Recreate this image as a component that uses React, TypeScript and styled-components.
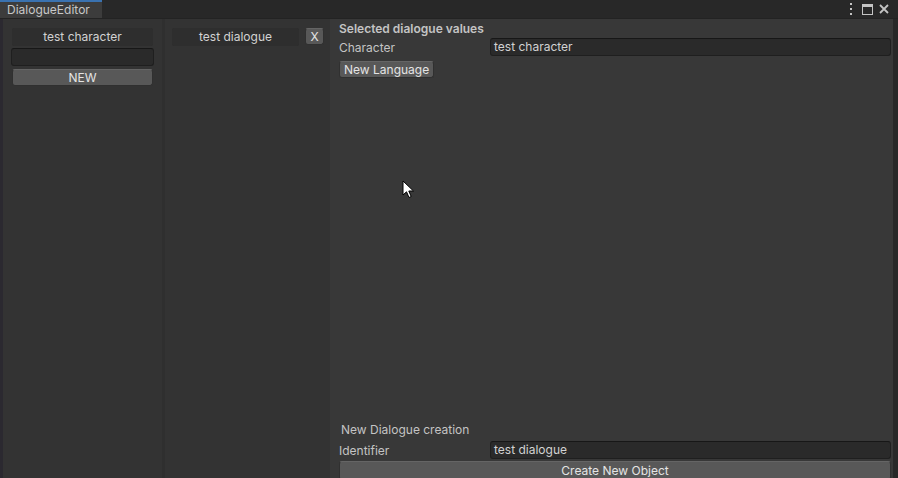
import React from "react";
import styled, { createGlobalStyle } from "styled-components";

const Global = createGlobalStyle`
  html, body { margin: 0; padding: 0; background: #282828; }
  body { font-family: Inter, "Noto Sans", sans-serif; font-size: 12px; }
  * { box-sizing: border-box; }
`;

const Window = styled.div`
  position: relative;
  width: 898px;
  height: 478px;
  display: flex;
  flex-direction: column;
  overflow: hidden;
  background: #282828;
  color: #c4c4c4;
`;

const TabBar = styled.div`
  height: 19px;
  flex: none;
  display: flex;
  align-items: stretch;
  background: #282828;
  border-bottom: 1px solid #232323;
`;

const Tab = styled.div`
  width: 102px;
  background: #3c3c3c;
  border-top: 2px solid #3a72b0;
  padding-left: 7px;
  line-height: 16px;
  font-size: 12px;
  color: #c8c8c8;
`;

const TabSpacer = styled.div`
  flex: 1;
`;

const WindowIcons = styled.div`
  display: flex;
  align-items: center;
  gap: 6px;
  padding-right: 9px;
  color: #c4c4c4;
`;

const Kebab = styled.svg`
  margin-right: 3px;
`;

const Body = styled.div`
  flex: 1;
  display: flex;
  min-height: 0;
  border-left: 3px solid #2b2930;
`;

const ListColumn = styled.div<{ $w: number; $pl: number }>`
  width: ${(p) => p.$w}px;
  flex: none;
  background: #333333;
  padding: 9px 8px 0 ${(p) => p.$pl}px;
  display: flex;
  flex-direction: column;
  align-items: stretch;
  gap: 2px;
`;

const ColumnDivider = styled.div`
  width: 3px;
  flex: none;
  background: #2f2f2f;
`;

const ItemRow = styled.div`
  display: flex;
  gap: 6px;
`;

const ItemBox = styled.div<{ $w?: number }>`
  height: 18px;
  flex: none;
  ${(p) => (p.$w ? `width: ${p.$w}px;` : "margin: 0 1px;")}
  background: #2e2e2e;
  border-radius: 2px;
  text-align: center;
  line-height: 18px;
  color: #d2d2d2;
`;

const TextInput = styled.div`
  height: 18px;
  flex: none;
  background: #2a2a2a;
  border: 1px solid #1f1f1f;
  border-top-color: #171717;
  border-radius: 3px;
  padding-left: 3px;
  line-height: 16px;
  color: #d2d2d2;
`;

const FieldInput = styled(TextInput)`
  flex: 1;
`;

const Button = styled.div<{ $w?: number; $h?: number }>`
  height: ${(p) => p.$h ?? 17}px;
  flex: none;
  ${(p) => (p.$w ? `width: ${p.$w}px;` : "")}
  background: #585858;
  border: 1px solid #303030;
  border-top-color: #656565;
  border-radius: 3px;
  text-align: center;
  line-height: ${(p) => (p.$h ?? 17) - 2}px;
  color: #e4e4e4;
  padding: 0 4px;
  white-space: nowrap;
`;

const ListButton = styled(Button)`
  margin: 1px 1px 0;
`;

const CreateButton = styled(Button)`
  margin-bottom: -2px;
`;

const Main = styled.div`
  flex: 1;
  background: #383838;
  padding: 1px 2px 0 9px;
  display: flex;
  flex-direction: column;
  min-width: 0;
`;

const RightStrip = styled.div`
  width: 5px;
  flex: none;
  background: #282828;
`;

const SectionTitle = styled.div<{ $bold?: boolean; $indent?: number }>`
  height: 18px;
  line-height: 18px;
  font-weight: ${(p) => (p.$bold ? 600 : 400)};
  padding-left: ${(p) => p.$indent ?? 0}px;
  color: #c4c4c4;
`;

const FieldRow = styled.div`
  display: flex;
  align-items: center;
  height: 18px;
`;

const FieldLabel = styled.div`
  width: 151px;
  flex: none;
  color: #c4c4c4;
`;

const TopActions = styled.div`
  margin-top: 5px;
  display: flex;
`;

const Spacer = styled.div`
  flex: 1;
`;

const BottomSection = styled.div`
  display: flex;
  flex-direction: column;
  gap: 2px;
`;

const Cursor = styled.svg`
  position: absolute;
  left: 402px;
  top: 180px;
`;

export default function App() {
  return (
    <>
      <Global />
      <Window>
        <TabBar>
          <Tab>DialogueEditor</Tab>
          <TabSpacer />
          <WindowIcons>
            <Kebab width="4" height="12" viewBox="0 0 4 12">
              <rect x="1" y="0" width="2" height="2" fill="#c4c4c4" />
              <rect x="1" y="5" width="2" height="2" fill="#c4c4c4" />
              <rect x="1" y="10" width="2" height="2" fill="#c4c4c4" />
            </Kebab>
            <svg width="11" height="11" viewBox="0 0 11 11">
              <rect x="0.5" y="0.5" width="10" height="10" fill="none" stroke="#c4c4c4" />
              <rect x="0" y="0" width="11" height="3" fill="#c4c4c4" />
            </svg>
            <svg width="10" height="10" viewBox="0 0 10 10">
              <path d="M1 1 L9 9 M9 1 L1 9" stroke="#c4c4c4" strokeWidth="1.8" />
            </svg>
          </WindowIcons>
        </TabBar>
        <Body>
          <ListColumn $w={159} $pl={8}>
            <ItemBox>test character</ItemBox>
            <TextInput />
            <ListButton>NEW</ListButton>
          </ListColumn>
          <ColumnDivider />
          <ListColumn $w={165} $pl={7}>
            <ItemRow>
              <ItemBox $w={127}>test dialogue</ItemBox>
              <Button $w={19} $h={17}>X</Button>
            </ItemRow>
          </ListColumn>
          <Main>
            <SectionTitle $bold>Selected dialogue values</SectionTitle>
            <FieldRow>
              <FieldLabel>Character</FieldLabel>
              <FieldInput>test character</FieldInput>
            </FieldRow>
            <TopActions>
              <Button $w={95}>New Language</Button>
            </TopActions>
            <Spacer />
            <BottomSection>
              <SectionTitle $indent={2}>New Dialogue creation</SectionTitle>
              <FieldRow>
                <FieldLabel>Identifier</FieldLabel>
                <FieldInput>test dialogue</FieldInput>
              </FieldRow>
              <CreateButton $h={19}>Create New Object</CreateButton>
            </BottomSection>
          </Main>
          <RightStrip />
        </Body>
        <Cursor width="13" height="20" viewBox="0 0 13 20">
          <path
            d="M1 1 L1 15 L4.5 11.8 L7 17.5 L9.2 16.5 L6.8 11 L11.5 11 Z"
            fill="#ffffff"
            stroke="#000000"
            strokeWidth="1"
            strokeLinejoin="round"
          />
        </Cursor>
      </Window>
    </>
  );
}
